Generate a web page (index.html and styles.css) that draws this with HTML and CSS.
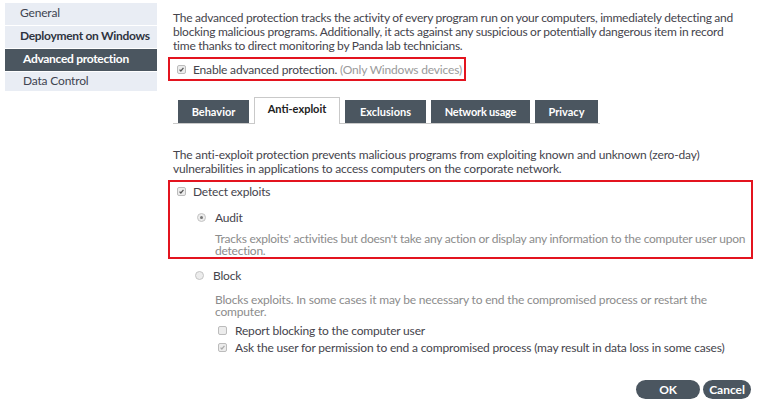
FILE: index.html
```html
<!DOCTYPE html>
<html lang="en">
<head>
    <meta charset="UTF-8">
    <meta name="viewport" content="width=device-width, initial-scale=1.0">
    <title>Advanced protection</title>
    <link rel="stylesheet" href="styles.css">
</head>
<body>
    <div class="page">
        <ul class="sidebar">
            <li class="nav-item">General</li>
            <li class="nav-item strong">Deployment on Windows</li>
            <li class="nav-item sub active">Advanced protection</li>
            <li class="nav-item sub">Data Control</li>
        </ul>

        <div class="main">
            <p class="intro lead">The advanced protection tracks the activity of every program run on your computers, immediately detecting and blocking malicious programs. Additionally, it acts against any suspicious or potentially dangerous item in record<br>time thanks to direct monitoring by Panda lab technicians.</p>

            <div class="highlight enable">
                <span class="check on"><svg viewBox="0 0 9 9"><path d="M2 4.6 L3.7 6.4 L7 2.4"/></svg></span>
                <span>Enable advanced protection. <span class="muted">(Only Windows devices)</span></span>
            </div>

            <div class="tabs">
                <div class="tab tab-behavior">Behavior</div>
                <div class="tab tab-exploit active">Anti-exploit</div>
                <div class="tab tab-exclusions">Exclusions</div>
                <div class="tab tab-network">Network usage</div>
                <div class="tab tab-privacy">Privacy</div>
            </div>

            <p class="intro second">The anti-exploit protection prevents malicious programs from exploiting known and unknown (zero-day) vulnerabilities in applications to access computers on the corporate network.</p>

            <div class="highlight detect">
                <div class="row">
                    <span class="check on"><svg viewBox="0 0 9 9"><path d="M2 4.6 L3.7 6.4 L7 2.4"/></svg></span>
                    <span>Detect exploits</span>
                </div>
                <div class="row option audit">
                    <span class="radio on"></span>
                    <span>Audit</span>
                </div>
                <p class="desc audit-desc">Tracks exploits' activities but doesn't take any action or display any information to the computer user upon detection.</p>
            </div>

            <div class="row option block">
                <span class="radio"></span>
                <span>Block</span>
            </div>
            <p class="desc block-desc">Blocks exploits. In some cases it may be necessary to end the compromised process or restart the computer.</p>

            <div class="row sub-check first">
                <span class="check"></span>
                <span>Report blocking to the computer user</span>
            </div>
            <div class="row sub-check">
                <span class="check on light"><svg viewBox="0 0 9 9"><path d="M2 4.6 L3.7 6.4 L7 2.4"/></svg></span>
                <span>Ask the user for permission to end a compromised process (may result in data loss in some cases)</span>
            </div>

            <div class="actions">
                <button class="btn ok">OK</button>
                <button class="btn">Cancel</button>
            </div>
        </div>
    </div>
</body>
</html>
```

FILE: styles.css
```css
* {
    margin: 0;
    padding: 0;
    box-sizing: border-box;
}

body {
    font-family: Lato, "Open Sans", sans-serif;
    font-size: 12px;
    letter-spacing: -0.18px;
    color: #45444c;
    background: white;
}

.page {
    display: flex;
    align-items: flex-start;
}

/* left navigation */
.sidebar {
    list-style: none;
    flex: none;
    width: 152px;
    margin: 3px 0 0 5px;
    background: #e9edf4;
}

.nav-item {
    height: 23px;
    line-height: 20px;
    padding-left: 15px;
    border-bottom: 1px solid white;
    color: #3f4450;
    white-space: nowrap;
}

.nav-item.strong {
    font-weight: 700;
    color: #2f3440;
    letter-spacing: -0.3px;
}

.nav-item.sub {
    padding-left: 18px;
}

.nav-item.active {
    background: #4b5660;
    color: white;
    font-weight: 700;
    letter-spacing: -0.3px;
}

.nav-item:last-child {
    height: 19px;
    line-height: 18px;
    border-bottom: none;
}

/* main panel */
.main {
    width: 580px;
    margin-left: 16px;
    padding-top: 11px;
}

.intro {
    line-height: 14px;
}

.lead {
    max-width: 566px;
    letter-spacing: -0.22px;
    word-spacing: -0.2px;
}

.muted {
    color: #9a9a9a;
}

.highlight {
    border: 2px solid #e3141f;
    margin-left: -5px;
}

.enable {
    display: flex;
    align-items: center;
    width: 298px;
    height: 24px;
    margin-top: 4px;
    padding-left: 7px;
    gap: 7px;
    white-space: nowrap;
}

.check {
    flex: none;
    width: 9px;
    height: 9px;
    border: 1px solid #bcbcbc;
    border-radius: 2px;
    background: #ececec;
}

.check svg {
    display: block;
    width: 7px;
    height: 7px;
}

.check path {
    fill: none;
    stroke: #555;
    stroke-width: 1.6;
}

.check.light path {
    stroke: #aaa;
}

.radio {
    flex: none;
    width: 9px;
    height: 9px;
    border: 1px solid #c4c4c4;
    border-radius: 50%;
    background: #ececec;
    display: flex;
    align-items: center;
    justify-content: center;
}

.radio.on::after {
    content: "";
    width: 3px;
    height: 3px;
    border-radius: 50%;
    background: #777;
}

/* tabs */
.tabs {
    display: flex;
    align-items: flex-end;
    gap: 5px;
    width: 427px;
    height: 27px;
    margin-top: 16px;
    padding-left: 5px;
    border-bottom: 1px solid #c9c9c9;
}

.tab {
    height: 23px;
    line-height: 23px;
    text-align: center;
    background: #4b5660;
    color: white;
    font-size: 11px;
    font-weight: 700;
    letter-spacing: 0;
    white-space: nowrap;
}

.tab-behavior { width: 71px; }
.tab-exploit { width: 86px; }
.tab-exclusions { width: 81px; }
.tab-network { width: 99px; letter-spacing: -0.2px; }
.tab-privacy { width: 63px; }

.tab.active {
    height: 27px;
    line-height: 22px;
    margin-bottom: -1px;
    background: white;
    color: #222;
    border: 1px solid #c9c9c9;
    border-bottom: none;
}

.second {
    margin-top: 24px;
}

.detect {
    margin-top: 4px;
    padding: 2px 0 0 7px;
}

.row {
    display: flex;
    align-items: center;
    gap: 7px;
    height: 14px;
    white-space: nowrap;
}

.option {
    gap: 9px;
}

.audit {
    margin-top: 12px;
    padding-left: 20px;
}

.desc {
    color: #8c8c8c;
    line-height: 12px;
}

.audit-desc {
    margin-top: 9px;
    padding-left: 38px;
    letter-spacing: -0.24px;
}

.block {
    margin-top: 9px;
    padding-left: 22px;
}

.block-desc {
    margin-top: 12px;
    padding-left: 42px;
}

.sub-check {
    height: 17px;
    padding-left: 45px;
    gap: 8px;
}

.sub-check.first {
    margin-top: 4px;
}

.actions {
    display: flex;
    justify-content: flex-end;
    gap: 3px;
    margin-top: 24px;
    padding-right: 2px;
}

.btn {
    height: 19px;
    padding: 0 6px;
    border: none;
    border-radius: 10px;
    background: #4b5660;
    color: white;
    font-family: Lato, sans-serif;
    font-size: 12px;
    font-weight: 700;
}

.btn.ok {
    width: 64px;
}
```
